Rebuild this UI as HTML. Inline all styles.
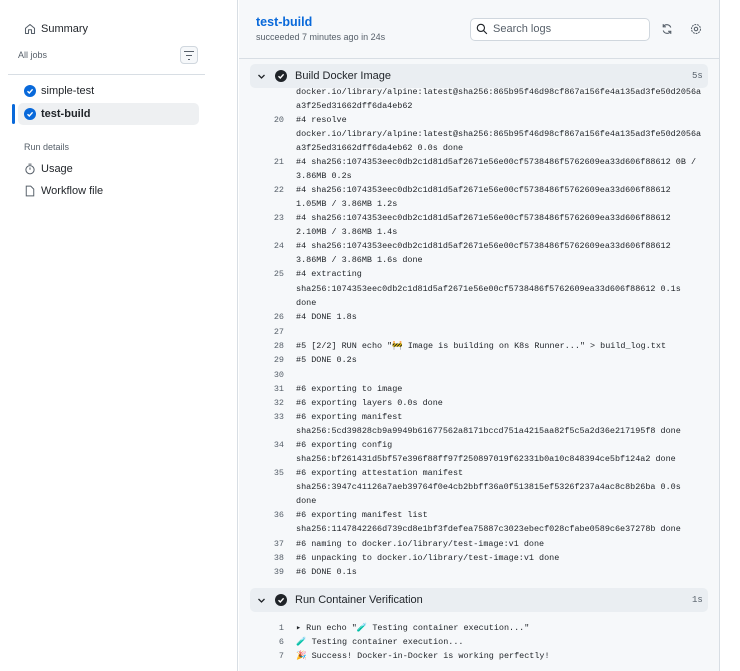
<html><head><style>
*{margin:0;padding:0;box-sizing:border-box}
body{width:740px;height:671px;overflow:hidden;background:#fff;font-family:"Liberation Sans",sans-serif;color:#1f2328;position:relative}
.side{position:absolute;left:0;top:0;width:238px;height:671px;background:#fff;border-right:1px solid #d8dee4}
.main{position:absolute;left:239px;top:0;width:481px;height:671px;background:#f6f8fa;border-right:1px solid #d8dee4}
.a{position:absolute;white-space:nowrap}
.mono{font-family:"Liberation Mono","DejaVu Sans Mono",monospace;font-size:8.45px;line-height:12px;color:#1f2328}
.mono div{margin-top:0;line-height:12px;height:12px}
.ln{position:absolute;width:30px;text-align:right;left:254px;color:#57606a}
.tx{position:absolute;left:296px}
.step{position:absolute;left:250px;width:458px;height:24px;background:#eaeef2;border-radius:5px}
</style></head><body>
<div class="side">
<svg class="a" style="left:24px;top:23px" width="12" height="12" viewBox="0 0 16 16"><path d="M2 7 L8 2 L14 7 V14 H10 V9 H6 V14 H2Z" fill="none" stroke="#57606a" stroke-width="1.4" stroke-linejoin="round"/></svg>
<div class="a" style="left:41px;top:23px;font-size:11px">Summary</div>
<div class="a" style="left:18px;top:50px;font-size:9px;color:#57606a">All jobs</div>
<div class="a" style="left:180px;top:46px;width:18px;height:18px;border:1px solid #d0d7de;border-radius:4px;background:#f6f8fa"></div>
<div class="a" style="left:184px;top:51px;width:10px;height:1.2px;background:#57606a"></div>
<div class="a" style="left:186px;top:55px;width:6px;height:1.2px;background:#57606a"></div>
<div class="a" style="left:188px;top:59px;width:2px;height:1.2px;background:#57606a"></div>
<div class="a" style="left:8px;top:74px;width:197px;height:1px;background:#d8dee4"></div>
<div class="a" style="left:24px;top:85px;width:12px;height:12px;border-radius:50%;background:#0969da"></div>
<svg class="a" style="left:24px;top:85px" width="12" height="12"><path d="M3.5 6.2 L5.3 8 L8.6 4.3" stroke="#fff" stroke-width="1.4" fill="none"/></svg>
<div class="a" style="left:41px;top:85px;font-size:11px">simple-test</div>
<div class="a" style="left:18px;top:103px;width:181px;height:22px;background:#eef0f2;border-radius:5px"></div>
<div class="a" style="left:12px;top:104px;width:3px;height:20px;background:#0969da;border-radius:2px"></div>
<div class="a" style="left:24px;top:108px;width:12px;height:12px;border-radius:50%;background:#0969da"></div>
<svg class="a" style="left:24px;top:108px" width="12" height="12"><path d="M3.5 6.2 L5.3 8 L8.6 4.3" stroke="#fff" stroke-width="1.4" fill="none"/></svg>
<div class="a" style="left:41px;top:108px;font-size:11px;font-weight:bold">test-build</div>
<div class="a" style="left:24px;top:142px;font-size:9px;color:#57606a">Run details</div>
<svg class="a" style="left:24px;top:163px" width="12" height="12" viewBox="0 0 16 16"><circle cx="8" cy="9" r="5.5" fill="none" stroke="#57606a" stroke-width="1.4"/><path d="M8 9V6M6 1.5h4" stroke="#57606a" stroke-width="1.4"/></svg>
<div class="a" style="left:41px;top:163px;font-size:11px">Usage</div>
<svg class="a" style="left:24px;top:185px" width="12" height="12" viewBox="0 0 16 16"><path d="M3 1.5h6l4 4v9H3z" fill="none" stroke="#57606a" stroke-width="1.3"/></svg>
<div class="a" style="left:41px;top:185px;font-size:11px">Workflow file</div>
</div>
<div class="main"></div>
<div class="a" style="left:256px;top:15px;font-size:12.5px;font-weight:bold;color:#0969da">test-build</div>
<div class="a" style="left:256px;top:32px;font-size:9px;color:#57606a">succeeded 7 minutes ago in 24s</div>
<div class="a" style="left:470px;top:18px;width:180px;height:23px;background:#fff;border:1px solid #d0d7de;border-radius:5px"></div>
<svg class="a" style="left:476px;top:23px" width="12" height="12" viewBox="0 0 16 16"><circle cx="6.5" cy="6.5" r="4.8" fill="none" stroke="#1f2328" stroke-width="1.5"/><path d="M10 10l4.5 4.5" stroke="#1f2328" stroke-width="1.5"/></svg>
<div class="a" style="left:493px;top:23px;font-size:11px;color:#57606a">Search logs</div>
<svg class="a" style="left:661px;top:23px" width="12" height="12" viewBox="0 0 16 16"><path d="M13 6A5.5 5.5 0 0 0 3 5M3 10a5.5 5.5 0 0 0 10 1" fill="none" stroke="#57606a" stroke-width="1.5"/><path d="M3 1.5V5h3.5M13 14.5V11H9.5" fill="none" stroke="#57606a" stroke-width="1.5"/></svg>
<svg class="a" style="left:690px;top:23px" width="12" height="12" viewBox="0 0 16 16"><circle cx="8" cy="8" r="2.3" fill="none" stroke="#57606a" stroke-width="1.4"/><circle cx="8" cy="8" r="6" fill="none" stroke="#57606a" stroke-width="1.4" stroke-dasharray="2.5 1.2"/></svg>
<div class="a" style="left:239px;top:58px;width:481px;height:1px;background:#d8dee4"></div>

<div class="mono">
<div class="tx" style="top:86px">docker.io/library/alpine:latest@sha256:865b95f46d98cf867a156fe4a135ad3fe50d2056a</div>
<div class="tx" style="top:100px">a3f25ed31662dff6da4eb62</div>
<div class="ln" style="top:114px">20</div><div class="tx" style="top:114px">#4 resolve</div>
<div class="tx" style="top:128px">docker.io/library/alpine:latest@sha256:865b95f46d98cf867a156fe4a135ad3fe50d2056a</div>
<div class="tx" style="top:142px">a3f25ed31662dff6da4eb62 0.0s done</div>
<div class="ln" style="top:156px">21</div><div class="tx" style="top:156px">#4 sha256:1074353eec0db2c1d81d5af2671e56e00cf5738486f5762609ea33d606f88612 0B /</div>
<div class="tx" style="top:170px">3.86MB 0.2s</div>
<div class="ln" style="top:184px">22</div><div class="tx" style="top:184px">#4 sha256:1074353eec0db2c1d81d5af2671e56e00cf5738486f5762609ea33d606f88612</div>
<div class="tx" style="top:198px">1.05MB / 3.86MB 1.2s</div>
<div class="ln" style="top:212px">23</div><div class="tx" style="top:212px">#4 sha256:1074353eec0db2c1d81d5af2671e56e00cf5738486f5762609ea33d606f88612</div>
<div class="tx" style="top:226px">2.10MB / 3.86MB 1.4s</div>
<div class="ln" style="top:240px">24</div><div class="tx" style="top:240px">#4 sha256:1074353eec0db2c1d81d5af2671e56e00cf5738486f5762609ea33d606f88612</div>
<div class="tx" style="top:254px">3.86MB / 3.86MB 1.6s done</div>
<div class="ln" style="top:268px">25</div><div class="tx" style="top:268px">#4 extracting</div>
<div class="tx" style="top:283px">sha256:1074353eec0db2c1d81d5af2671e56e00cf5738486f5762609ea33d606f88612 0.1s</div>
<div class="tx" style="top:297px">done</div>
<div class="ln" style="top:311px">26</div><div class="tx" style="top:311px">#4 DONE 1.8s</div>
<div class="ln" style="top:326px">27</div>
<div class="ln" style="top:340px">28</div><div class="tx" style="top:340px">#5 [2/2] RUN echo "🚧 Image is building on K8s Runner..." &gt; build_log.txt</div>
<div class="ln" style="top:354px">29</div><div class="tx" style="top:354px">#5 DONE 0.2s</div>
<div class="ln" style="top:369px">30</div>
<div class="ln" style="top:383px">31</div><div class="tx" style="top:383px">#6 exporting to image</div>
<div class="ln" style="top:397px">32</div><div class="tx" style="top:397px">#6 exporting layers 0.0s done</div>
<div class="ln" style="top:411px">33</div><div class="tx" style="top:411px">#6 exporting manifest</div>
<div class="tx" style="top:425px">sha256:5cd39828cb9a9949b61677562a8171bccd751a4215aa82f5c5a2d36e217195f8 done</div>
<div class="ln" style="top:439px">34</div><div class="tx" style="top:439px">#6 exporting config</div>
<div class="tx" style="top:453px">sha256:bf261431d5bf57e396f88ff97f250897019f62331b0a10c848394ce5bf124a2 done</div>
<div class="ln" style="top:467px">35</div><div class="tx" style="top:467px">#6 exporting attestation manifest</div>
<div class="tx" style="top:481px">sha256:3947c41126a7aeb39764f0e4cb2bbff36a0f513815ef5326f237a4ac8c8b26ba 0.0s</div>
<div class="tx" style="top:495px">done</div>
<div class="ln" style="top:509px">36</div><div class="tx" style="top:509px">#6 exporting manifest list</div>
<div class="tx" style="top:523px">sha256:1147842266d739cd8e1bf3fdefea75887c3023ebecf028cfabe0589c6e37278b done</div>
<div class="ln" style="top:538px">37</div><div class="tx" style="top:538px">#6 naming to docker.io/library/test-image:v1 done</div>
<div class="ln" style="top:552px">38</div><div class="tx" style="top:552px">#6 unpacking to docker.io/library/test-image:v1 done</div>
<div class="ln" style="top:566px">39</div><div class="tx" style="top:566px">#6 DONE 0.1s</div>
<div class="ln" style="top:622px">1</div><div class="tx" style="top:622px">▸ Run echo "🧪 Testing container execution..."</div>
<div class="ln" style="top:636px">6</div><div class="tx" style="top:636px">🧪 Testing container execution...</div>
<div class="ln" style="top:650px">7</div><div class="tx" style="top:650px">🎉 Success! Docker-in-Docker is working perfectly!</div>
</div>

<div class="step" style="top:64px"></div>
<svg class="a" style="left:257px;top:72px" width="9" height="9"><path d="M1.5 3 L4.5 6 L7.5 3" stroke="#1f2328" stroke-width="1.3" fill="none"/></svg>
<div class="a" style="left:275px;top:70px;width:12px;height:12px;border-radius:50%;background:#1f2328"></div>
<svg class="a" style="left:275px;top:70px" width="12" height="12"><path d="M3.5 6.2 L5.3 8 L8.6 4.3" stroke="#fff" stroke-width="1.4" fill="none"/></svg>
<div class="a" style="left:295px;top:70px;font-size:11px">Build Docker Image</div>
<div class="a mono" style="left:692px;top:70px;font-size:9px;color:#57606a">5s</div>

<div class="step" style="top:588px"></div>
<svg class="a" style="left:257px;top:596px" width="9" height="9"><path d="M1.5 3 L4.5 6 L7.5 3" stroke="#1f2328" stroke-width="1.3" fill="none"/></svg>
<div class="a" style="left:275px;top:594px;width:12px;height:12px;border-radius:50%;background:#1f2328"></div>
<svg class="a" style="left:275px;top:594px" width="12" height="12"><path d="M3.5 6.2 L5.3 8 L8.6 4.3" stroke="#fff" stroke-width="1.4" fill="none"/></svg>
<div class="a" style="left:295px;top:594px;font-size:11px">Run Container Verification</div>
<div class="a mono" style="left:692px;top:594px;font-size:9px;color:#57606a">1s</div>
</body></html>
